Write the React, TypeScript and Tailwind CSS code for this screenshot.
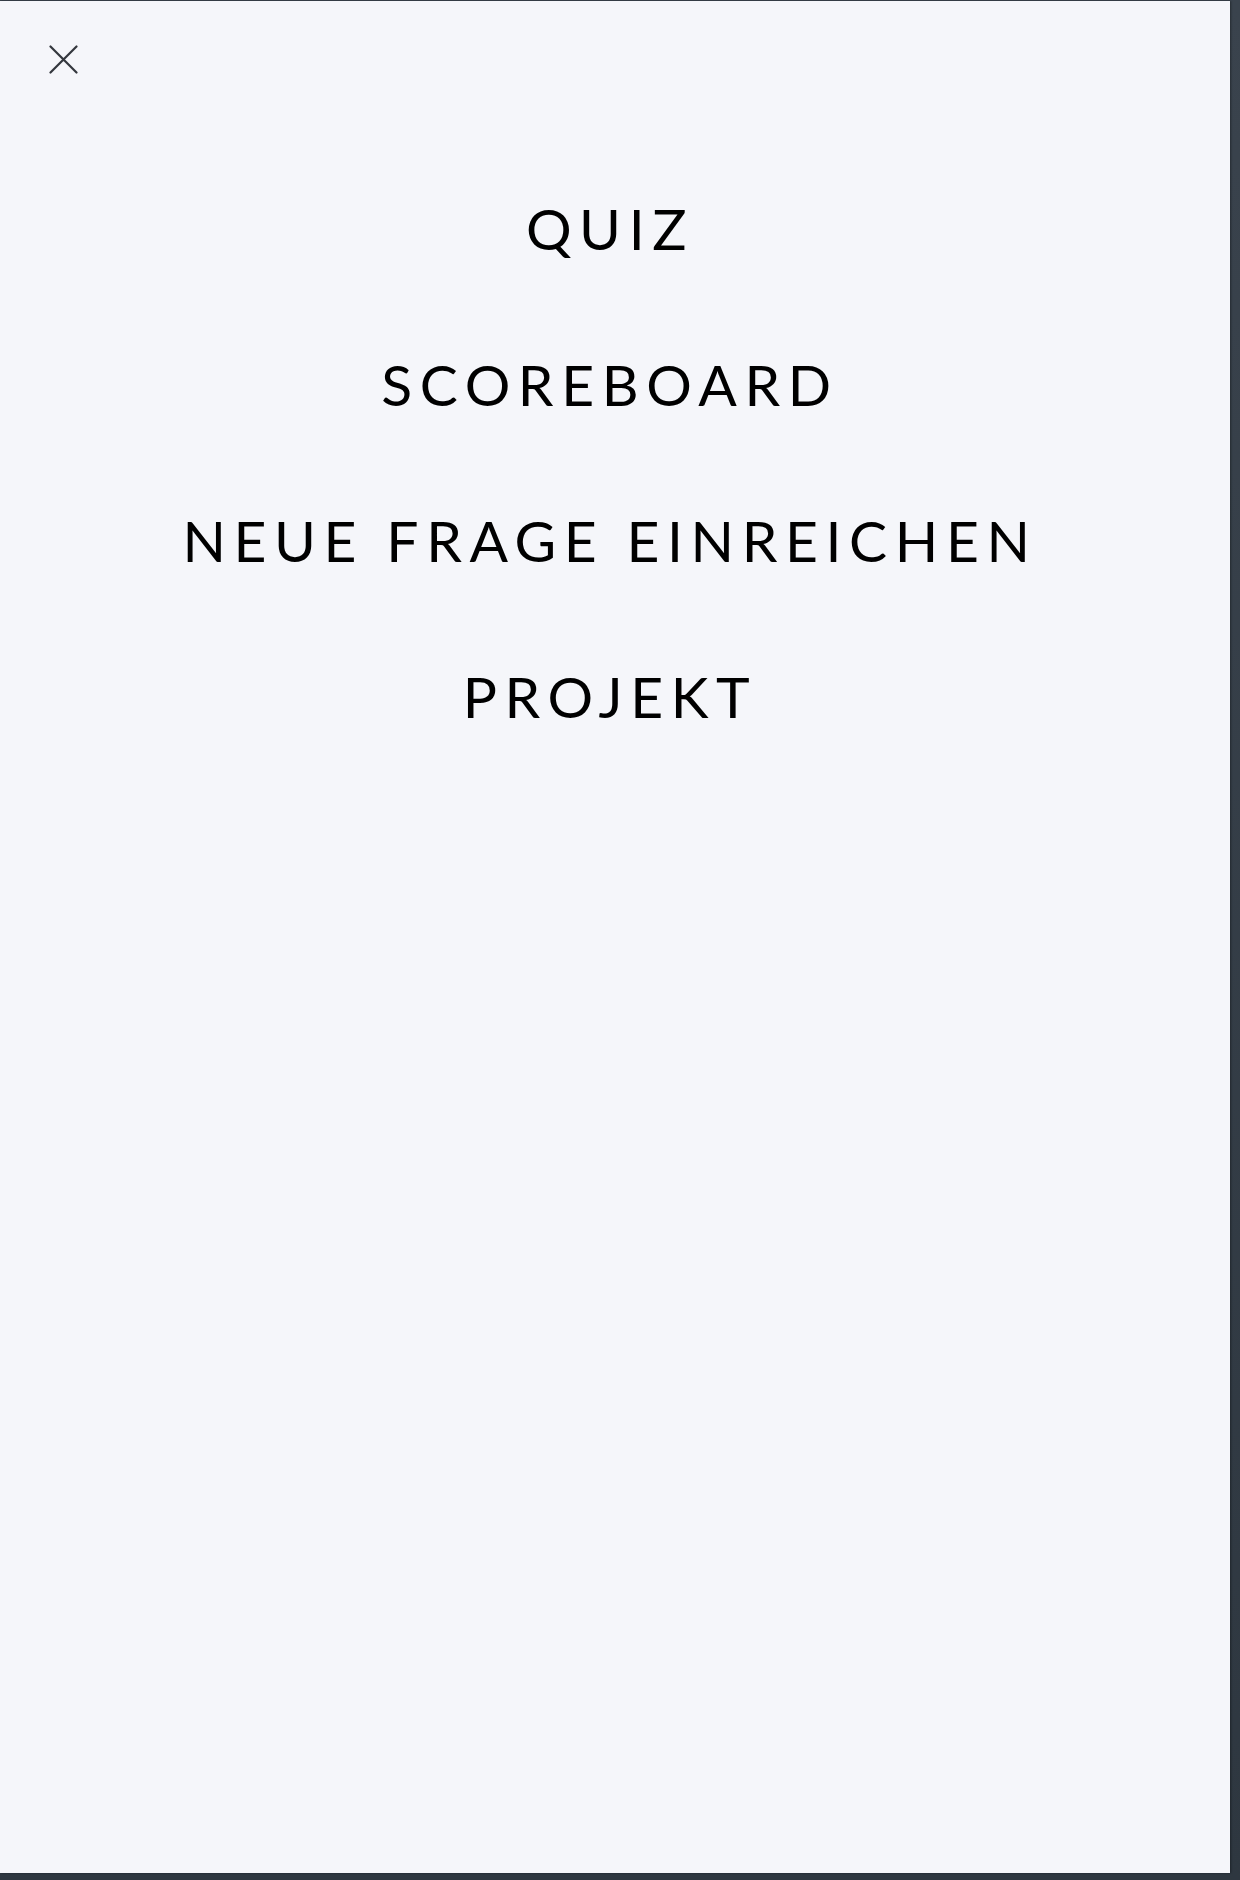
import React from "react";

export default function App() {
  const links = ["QUIZ", "SCOREBOARD", "NEUE FRAGE EINREICHEN", "PROJEKT"];
  return (
    <div className="h-[1880px] w-full bg-gradient-to-b from-[#3a434d] to-[#2e3740] pt-px">
      <div className="relative h-[1872px] w-[1230px] bg-[#f5f6fa] shadow-[1px_0_2px_rgba(0,0,0,0.35)]">
        <button className="absolute left-[45px] top-[40px] flex h-[37px] w-[37px] items-center justify-center text-[#33373d]">
          <svg width="29" height="29" viewBox="0 0 29 29" fill="none" stroke="currentColor" strokeWidth="2.2" strokeLinecap="round">
            <path d="M1.5 1.5 L27.5 27.5 M27.5 1.5 L1.5 27.5" />
          </svg>
        </button>
        <nav className="flex flex-col items-center pt-[193px] pr-[10px] gap-[88px]" style={{ fontFamily: "Lato, sans-serif" }}>
          {links.map((l) => (
            <a key={l} href="#" className="text-[57px] leading-[68px] tracking-[7.6px] text-black">
              {l}
            </a>
          ))}
        </nav>
      </div>
    </div>
  );
}
